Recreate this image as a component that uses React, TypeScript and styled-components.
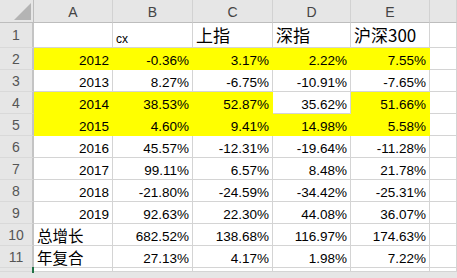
import React from "react";
import styled, { createGlobalStyle } from "styled-components";

const GlobalStyle = createGlobalStyle`
    html, body {
        margin: 0;
        padding: 0;
        background: #ffffff;
        overflow: hidden;
    }
`;

interface CellStyleProp {
    $fill?: boolean;
    $align?: "left" | "right";
    $kind?: "num" | "cjk" | "small" | "label";
}

const Sheet = styled.div`
    width: 457px;
    height: 278px;
    display: flex;
    flex-direction: column;
    overflow: hidden;
    font-family: "Liberation Sans", Arial, sans-serif;
`;

const Grid = styled.div`
    display: grid;
    grid-template-columns: 34px 79px 80px 80px 78px 79px 1fr;
    grid-template-rows: 23px 25px repeat(10, 22px) 4px;
    background: #ffffff;
`;

const Corner = styled.div`
    background: #e6e6e6;
    border-right: 1px solid #bdbdbd;
    border-bottom: 1px solid #bdbdbd;
    display: flex;
    align-items: flex-end;
    justify-content: flex-end;
    padding: 0 2px 2px 0;
`;

const ColHead = styled.div`
    background: #e6e6e6;
    border-right: 1px solid #d2d2d2;
    border-bottom: 1px solid #bdbdbd;
    color: #444444;
    font-size: 14px;
    display: flex;
    align-items: center;
    justify-content: center;
    padding-top: 1px;
`;

const RowHead = styled.div`
    position: relative;
    background: #e6e6e6;
    border-right: 2px solid #c4c4c4;
    border-bottom: 1px solid #d9d9d9;
    color: #555555;
    font-size: 14px;
    display: flex;
    align-items: center;
    justify-content: center;
`;

const Cell = styled.div<CellStyleProp>`
    background: ${(props) => (props.$fill ? "#ffff00" : "#ffffff")};
    border-right: 1px solid ${(props) => (props.$fill ? "#ffff00" : "#d4d4d4")};
    border-bottom: 1px solid ${(props) => (props.$fill ? "#ffff00" : "#d4d4d4")};
    color: #000000;
    display: flex;
    align-items: flex-end;
    justify-content: ${(props) => (props.$align === "left" ? "flex-start" : "flex-end")};
    padding: 0 3px;
    white-space: nowrap;
    overflow: visible;
    font-size: ${(props) =>
        props.$kind === "cjk" ? "17px" : props.$kind === "label" ? "15.5px" : props.$kind === "small" ? "12px" : "13.5px"};
    line-height: ${(props) => (props.$kind === "cjk" ? "20px" : props.$kind === "label" ? "18px" : "16px")};
    font-family: ${(props) =>
        props.$kind === "cjk" || props.$kind === "label"
            ? `"Noto Sans CJK SC", sans-serif`
            : `"Liberation Sans", Arial, sans-serif`};
    padding-bottom: ${(props) => (props.$kind === "cjk" ? "2px" : props.$kind === "label" ? "1px" : "0")};
`;

const SelMark = styled.span`
    position: absolute;
    right: -2px;
    top: -1px;
    width: 2px;
    height: 6px;
    background: #217346;
`;

const BottomBar = styled.div`
    flex: 1;
    background: #e6e6e6;
`;

const columns = ["A", "B", "C", "D", "E", ""];

type Row = { values: string[]; fills: boolean[] };

const rows: Row[] = [
    { values: ["2012", "-0.36%", "3.17%", "2.22%", "7.55%"], fills: [true, true, true, true, true] },
    { values: ["2013", "8.27%", "-6.75%", "-10.91%", "-7.65%"], fills: [false, false, false, false, false] },
    { values: ["2014", "38.53%", "52.87%", "35.62%", "51.66%"], fills: [true, true, true, false, true] },
    { values: ["2015", "4.60%", "9.41%", "14.98%", "5.58%"], fills: [true, true, true, true, true] },
    { values: ["2016", "45.57%", "-12.31%", "-19.64%", "-11.28%"], fills: [false, false, false, false, false] },
    { values: ["2017", "99.11%", "6.57%", "8.48%", "21.78%"], fills: [false, false, false, false, false] },
    { values: ["2018", "-21.80%", "-24.59%", "-34.42%", "-25.31%"], fills: [false, false, false, false, false] },
    { values: ["2019", "92.63%", "22.30%", "44.08%", "36.07%"], fills: [false, false, false, false, false] },
    { values: ["总增长", "682.52%", "138.68%", "116.97%", "174.63%"], fills: [false, false, false, false, false] },
    { values: ["年复合", "27.13%", "4.17%", "1.98%", "7.22%"], fills: [false, false, false, false, false] },
];

const App: React.FC = () => {
    return (
        <Sheet>
            <GlobalStyle />
            <Grid>
                <Corner>
                    <svg width="17" height="17" viewBox="0 0 17 17">
                        <polygon points="0,17 17,17 17,0" fill="#b4b4b4" />
                    </svg>
                </Corner>
                {columns.map((c, i) => (
                    <ColHead key={"h" + i}>{c}</ColHead>
                ))}

                <RowHead>1</RowHead>
                <Cell />
                <Cell $align="left" $kind="small">cx</Cell>
                <Cell $align="left" $kind="cjk">上指</Cell>
                <Cell $align="left" $kind="cjk">深指</Cell>
                <Cell $align="left" $kind="cjk">沪深300</Cell>
                <Cell />

                {rows.map((row, r) => (
                    <React.Fragment key={"r" + r}>
                        <RowHead>{r + 2}</RowHead>
                        {row.values.map((v, c) => {
                            const isLabel = c === 0 && /[^\d]/.test(v);
                            return (
                                <Cell
                                    key={c}
                                    $fill={row.fills[c]}
                                    $align={isLabel ? "left" : "right"}
                                    $kind={isLabel ? "label" : "num"}
                                >
                                    {v}
                                </Cell>
                            );
                        })}
                        <Cell />
                    </React.Fragment>
                ))}

                <RowHead>
                    <SelMark />
                </RowHead>
                {columns.map((_, i) => (
                    <Cell key={"e" + i} />
                ))}
            </Grid>
            <BottomBar />
        </Sheet>
    );
};

export default App;
